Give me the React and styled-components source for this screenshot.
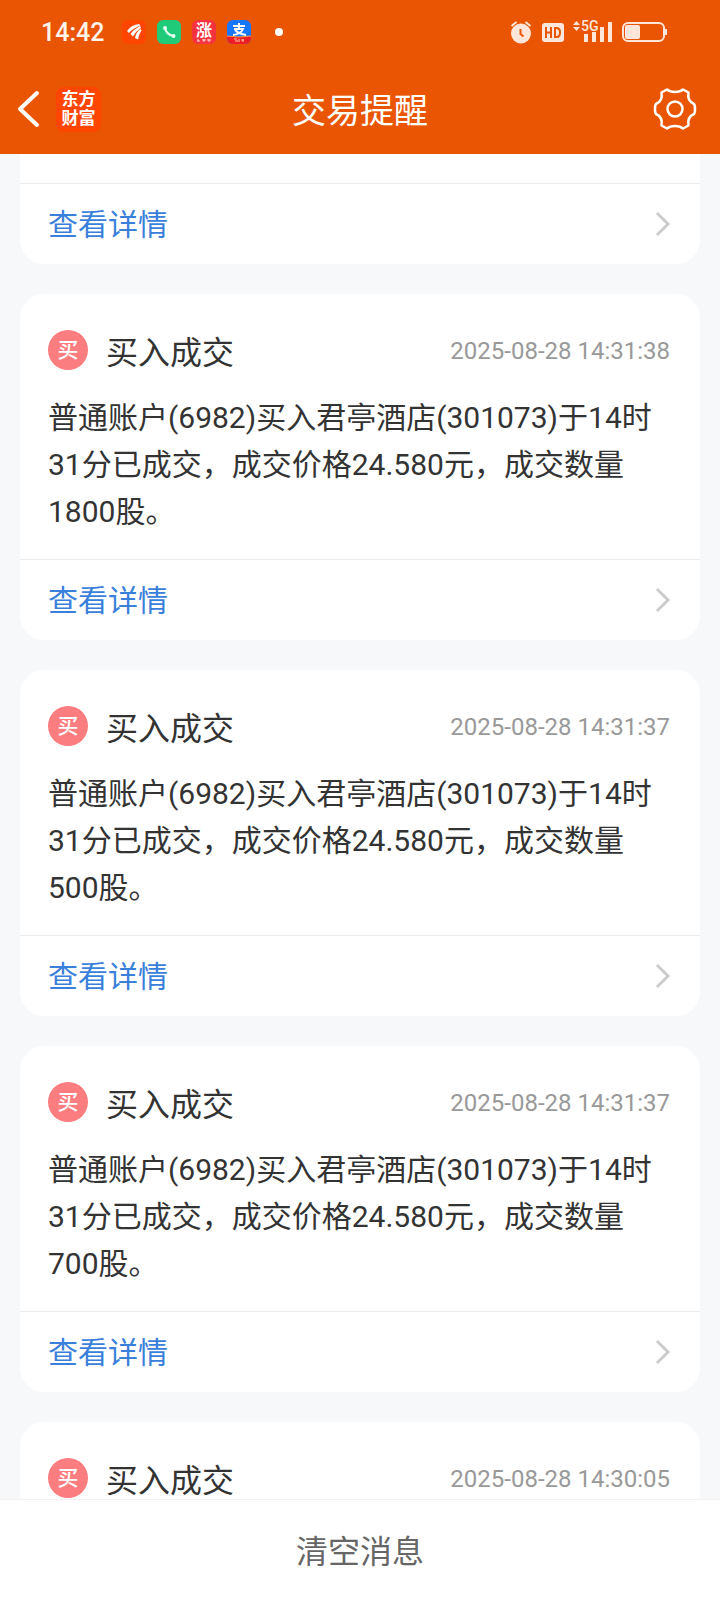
import React from "react";
import styled, { createGlobalStyle } from "styled-components";

const GlobalStyle = createGlobalStyle`
  *, *::before, *::after { box-sizing: border-box; }
  body {
    margin: 0;
    background: #f7f8fa;
    font-family: Roboto, "Noto Sans CJK SC", sans-serif;
    font-weight: 400;
    color: #333;
  }
  button { font: inherit; border: 0; padding: 0; background: none; cursor: pointer; }
  h1, h2, p { margin: 0; font-weight: 400; }
  svg { display: block; overflow: visible; }
`;

const Screen = styled.div`
  display: flex;
  flex-direction: column;
  height: 100vh;
`;

const Top = styled.header`
  flex: none;
  background: #ea5504;
  color: #fff;
`;

const StatusBar = styled.div`
  display: flex;
  align-items: center;
  justify-content: space-between;
  height: 64px;
  padding: 0 53px 0 41px;
`;

const StatusGroup = styled.div`
  display: flex;
  align-items: center;
  gap: ${(p) => p.$gap}px;
`;

const Clock = styled.time`
  padding-top: 2px;
  font-size: 25px;
  line-height: 32px;
  font-weight: 500;
  margin-right: 7px;
  color: #fff3ea;
`;

const Dot = styled.span`
  width: 8px;
  height: 8px;
  margin-left: 13px;
  border-radius: 50%;
  background: #fff;
`;

const NavBar = styled.div`
  display: grid;
  grid-template-columns: 1fr auto 1fr;
  align-items: center;
  height: 90px;
  padding: 0 23px 0 16px;
`;

const NavLeft = styled.div`
  display: flex;
  align-items: center;
  gap: 16px;
`;

const NavTitle = styled.h1`
  padding: 4px 0 0 7px;
  font-size: 34px;
  line-height: 48px;
`;

const Logo = styled.span`
  display: grid;
  place-content: center;
  width: 45px;
  height: 45px;
  border-radius: 8px;
  background: #ff4502;
  font-size: 17px;
  line-height: 19px;
  font-weight: 700;
`;

const SettingsButton = styled.button`
  justify-self: end;
`;

const List = styled.main`
  flex: 1;
  min-height: 0;
  overflow: hidden;
  padding: 0 20px;
`;

const Card = styled.article`
  margin-bottom: 30px;
  border-radius: ${(p) => (p.$continued ? "0 0 24px 24px" : "24px")};
  padding-top: ${(p) => (p.$continued ? 29 : 30)}px;
  padding-bottom: ${(p) => (p.$headOnly ? 30 : 0)}px;
  background: #fff;
`;

const CardHead = styled.div`
  display: flex;
  align-items: center;
  height: 52px;
  padding: 0 30px 0 28px;
`;

const Badge = styled.span`
  display: grid;
  place-items: center;
  width: 40px;
  height: 40px;
  margin-right: 18px;
  border-radius: 50%;
  background: #fb7d7f;
  color: #fff;
  font-size: 21px;
  line-height: 24px;
  font-weight: 500;
`;

const CardTitle = styled.h2`
  flex: 1;
  padding-top: 6px;
  font-size: 32px;
  line-height: 46px;
`;

const Stamp = styled.time`
  padding-top: 1px;
  font-size: 24px;
  line-height: 32px;
  color: #999;
`;

const Message = styled.p`
  padding: 18px 28px 24px;
  font-size: 30px;
  line-height: 47px;
`;

const DetailLink = styled.a`
  display: flex;
  align-items: center;
  justify-content: space-between;
  height: 81px;
  padding: 0 29px 0 28px;
  border-top: 1px solid #ebebeb;
  color: #3a7fd9;
  font-size: 30px;
  line-height: 44px;
  text-decoration: none;
`;

const LinkLabel = styled.span`
  padding-top: 2px;
`;

const ClearButton = styled.button`
  flex: none;
  height: 101px;
  && {
    padding-top: 4px;
    border-top: 1px solid #f3f3f3;
    background: #fff;
    color: #666;
    font-size: 32px;
    line-height: 48px;
  }
`;

const BrandIcon = () => (
  <svg width="24" height="24" viewBox="0 0 24 24" aria-hidden="true">
    <rect width="24" height="24" rx="6" fill="#ff4502" />
    <g fill="#fff">
      <path d="M5 11Q9 5 17 4L18.500 5.500Q11 8 7 13Z" />
      <path d="M8.500 14Q12 9 18 6L19 8Q14 11 11 16.500Z" />
      <path d="M13 18Q14 12 18.500 9L19.500 10.500Q17 14 16 19.500Z" />
    </g>
  </svg>
);

const PhoneIcon = () => (
  <svg width="24" height="24" viewBox="0 0 24 24" aria-hidden="true">
    <rect width="24" height="24" rx="6" fill="#1fca78" />
    <path d="M8 8Q9 14 16 16" fill="none" stroke="#e2fff0" strokeWidth="2" />
    <circle cx="8" cy="8" r="2" fill="#e2fff0" />
    <circle cx="16.500" cy="16" r="2" fill="#e2fff0" />
  </svg>
);

const TileText = styled.text`
  font-family: "Noto Sans CJK SC", sans-serif;
  font-weight: 700;
  text-anchor: middle;
  fill: #fff;
`;

const RiseIcon = () => (
  <svg width="24" height="24" viewBox="0 0 24 24" aria-hidden="true">
    <rect width="24" height="24" rx="6" fill="#f5333f" />
    <TileText x="12" y="16" fontSize="16">涨</TileText>
    <path d="M5 21h3M6 19v2M10 20h4M15 20h4M12 19v3M17 19v3" stroke="#ffd9dc" />
  </svg>
);

const PayIcon = () => (
  <svg width="24" height="24" viewBox="0 0 24 24" aria-hidden="true">
    <clipPath id="payTile"><rect width="24" height="24" rx="6" /></clipPath>
    <g clipPath="url(#payTile)">
      <rect width="24" height="24" fill="#1777ff" />
      <path d="M0 16Q12 18 24 16V24H0Z" fill="#ee1c25" />
      <path d="M0 16Q12 18 24 16" fill="none" stroke="#ff9c3a" />
      <path d="M7 19h3M8 21h3M12 19v3M14 20h3M16 19v3" stroke="#ffc9a0" />
    </g>
    <path d="M6 6H18M12 3V9M7 9H16Q14 14 6 15M8 10Q12 14 19 15" fill="none" stroke="#fff" strokeWidth="2" />
  </svg>
);

const TINT = "#ffe6da";

const AlarmIcon = () => (
  <svg width="23" height="24" viewBox="0 0 23 24" aria-hidden="true">
    <circle cx="11" cy="13.500" r="10" fill={TINT} />
    <path d="M1.500 6L6.500 2M20.500 6L15.500 2" stroke={TINT} strokeWidth="2" />
    <path d="M10.500 9V14L13.500 16.500" fill="none" stroke="#ea5504" strokeWidth="2" />
  </svg>
);

const HdIcon = () => (
  <svg width="22" height="24" viewBox="0 0 22 24" aria-hidden="true">
    <rect y="3" width="22" height="19" rx="3" fill={TINT} />
    <path d="M4 7V18M9 7V18M4 12.500H9M13 8V17H14.500Q18 17 18 12.500T14.500 8Z" fill="none" stroke="#ea5504" strokeWidth="2" />
  </svg>
);

const SignalText = styled.text`
  font-family: Roboto, sans-serif;
  font-size: 14px;
  font-weight: 500;
  fill: ${TINT};
`;

const SignalIcon = () => (
  <svg width="40" height="24" viewBox="0 0 40 24" aria-hidden="true">
    <path d="M0 5L3.500 1L7 5ZM0 7H7L3.500 11Z" fill={TINT} />
    <SignalText x="8" y="11">5G</SignalText>
    <path d="M13 14V22M21 12V22M29 7V22M37 2V22" stroke={TINT} strokeWidth="4" />
  </svg>
);

const BatteryIcon = () => (
  <svg width="45" height="24" viewBox="0 0 45 24" aria-hidden="true">
    <rect x="1" y="3" width="41" height="18" rx="5" fill="none" stroke={TINT} strokeWidth="2" />
    <rect x="3" y="5" width="15" height="14" rx="2" fill={TINT} />
    <path d="M44 9V15" stroke={TINT} strokeWidth="2" />
  </svg>
);

const BackIcon = () => (
  <svg width="24" height="40" viewBox="0 0 24 40" aria-hidden="true">
    <path d="M21 4L4 20L21 36" fill="none" stroke="#fff" strokeWidth="4" strokeLinecap="round" strokeLinejoin="round" />
  </svg>
);

const GearIcon = () => (
  <svg width="44" height="44" viewBox="0 0 44 44" aria-hidden="true">
    <g fill="none" stroke="#fff" strokeWidth="2.500" strokeLinejoin="round">
      <path d="M14 2.500Q17 5 22 5T30 2.500L35.500 5.500Q34 14 41 17Q42 18 42 22T41 27Q34 30 35.500 38.500L30 41.500Q27 39 22 39T14 41.500L8.500 38.500Q10 30 3 27Q2 26 2 22T3 17Q10 14 8.500 5.500Z" />
      <circle cx="22" cy="22" r="7.500" />
    </g>
  </svg>
);

const ChevronIcon = () => (
  <svg width="16" height="26" viewBox="0 0 16 26" aria-hidden="true">
    <path d="M2 2L13 13L2 24" fill="none" stroke="#ccc" strokeWidth="3" />
  </svg>
);

const trades = [
  { time: "2025-08-28 14:31:38", volume: 1800 },
  { time: "2025-08-28 14:31:37", volume: 500 },
  { time: "2025-08-28 14:31:37", volume: 700 },
  { time: "2025-08-28 14:30:05" },
];

const Details = () => (
  <DetailLink href="#details">
    <LinkLabel>查看详情</LinkLabel>
    <ChevronIcon />
  </DetailLink>
);

const TradeCard = ({ time, volume }) => (
  <Card $headOnly={!volume}>
    <CardHead>
      <Badge>买</Badge>
      <CardTitle>买入成交</CardTitle>
      <Stamp>{time}</Stamp>
    </CardHead>
    {volume && (
      <>
        <Message>
          普通账户(6982)买入君亭酒店(301073)于14时31分已成交，成交价格24.580元，成交数量{volume}股。
        </Message>
        <Details />
      </>
    )}
  </Card>
);

export default function App() {
  return (
    <Screen lang="zh-CN">
      <GlobalStyle />
      <Top>
        <StatusBar>
          <StatusGroup $gap={11}>
            <Clock>14:42</Clock>
            <BrandIcon />
            <PhoneIcon />
            <RiseIcon />
            <PayIcon />
            <Dot />
          </StatusGroup>
          <StatusGroup $gap={9}>
            <AlarmIcon />
            <HdIcon />
            <SignalIcon />
            <BatteryIcon />
          </StatusGroup>
        </StatusBar>
        <NavBar>
          <NavLeft>
            <button aria-label="返回"><BackIcon /></button>
            <Logo><span>东方</span><span>财富</span></Logo>
          </NavLeft>
          <NavTitle>交易提醒</NavTitle>
          <SettingsButton aria-label="设置"><GearIcon /></SettingsButton>
        </NavBar>
      </Top>
      <List>
        <Card $continued>
          <Details />
        </Card>
        {trades.map((trade, i) => (
          <TradeCard key={i} {...trade} />
        ))}
      </List>
      <ClearButton>清空消息</ClearButton>
    </Screen>
  );
}
